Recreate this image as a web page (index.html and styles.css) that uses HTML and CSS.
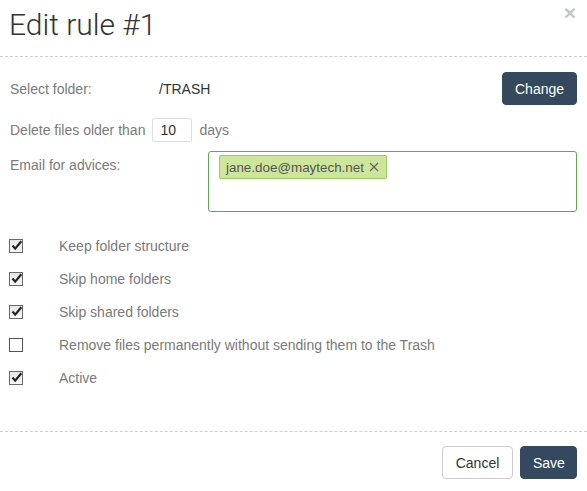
FILE: index.html
```html
<!DOCTYPE html>
<html>
<head>
<meta charset="utf-8">
<link rel="stylesheet" href="styles.css">
</head>
<body>
<div class="modal">
  <div class="modal-header">
    <h1 class="title">Edit rule #1</h1>
    <span class="close">×</span>
  </div>
  <div class="modal-body">
    <div class="row row-folder">
      <span class="label label-folder">Select folder:</span>
      <span class="folder-path">/TRASH</span>
      <button class="btn btn-dark btn-change">Change</button>
    </div>
    <div class="row row-days">
      <span class="label">Delete files older than</span>
      <span class="days-input">10</span>
      <span class="label">days</span>
    </div>
    <div class="row row-email">
      <span class="label label-email">Email for advices:</span>
      <div class="tag-box">
        <span class="tag">jane.doe@maytech.net<svg class="tag-x" viewBox="0 0 10 10" width="10" height="10"><path d="M1 1 L9 9 M9 1 L1 9" stroke="#666" stroke-width="1.2" fill="none"/></svg></span>
      </div>
    </div>
    <div class="checks">
      <div class="check-row"><span class="cb checked"><svg viewBox="0 0 13 13" width="13" height="13"><path d="M2.5 6.5 L5.2 9.6 L11.3 2.2" fill="none" stroke="#1f2326" stroke-width="2.2"/></svg></span><span class="check-label">Keep folder structure</span></div>
      <div class="check-row"><span class="cb checked"><svg viewBox="0 0 13 13" width="13" height="13"><path d="M2.5 6.5 L5.2 9.6 L11.3 2.2" fill="none" stroke="#1f2326" stroke-width="2.2"/></svg></span><span class="check-label">Skip home folders</span></div>
      <div class="check-row"><span class="cb checked"><svg viewBox="0 0 13 13" width="13" height="13"><path d="M2.5 6.5 L5.2 9.6 L11.3 2.2" fill="none" stroke="#1f2326" stroke-width="2.2"/></svg></span><span class="check-label">Skip shared folders</span></div>
      <div class="check-row"><span class="cb"></span><span class="check-label">Remove files permanently without sending them to the Trash</span></div>
      <div class="check-row"><span class="cb checked"><svg viewBox="0 0 13 13" width="13" height="13"><path d="M2.5 6.5 L5.2 9.6 L11.3 2.2" fill="none" stroke="#1f2326" stroke-width="2.2"/></svg></span><span class="check-label">Active</span></div>
    </div>
  </div>
  <div class="modal-footer">
    <button class="btn btn-light">Cancel</button>
    <button class="btn btn-dark">Save</button>
  </div>
</div>
</body>
</html>
```
FILE: styles.css
```css
* { box-sizing: border-box; }
html, body { margin: 0; padding: 0; background: #fff; }
body {
  font-family: "Liberation Sans", Arial, sans-serif;
  font-size: 14px;
  color: #777;
  width: 587px;
  height: 491px;
  overflow: hidden;
}
.modal { width: 587px; }
.modal-header {
  position: relative;
  height: 57px;
  padding: 5px 10px 0 9px;
  border-bottom: 1px dashed #cfcfcf;
}
.title {
  margin: 0;
  font-family: Roboto, "Liberation Sans", sans-serif;
  font-weight: 300;
  font-size: 30px;
  line-height: 40px;
  color: #333;
}
.close {
  position: absolute;
  top: 0;
  right: 11px;
  font-family: "Liberation Sans", Arial, sans-serif;
  font-weight: bold;
  font-size: 21px;
  line-height: 26px;
  color: #c4c4c4;
}
.modal-body { padding: 15px 10px 0 10px; height: 374px; }
.row { display: flex; align-items: center; }
.label { color: #7a7a7a; }
.row-folder { height: 33px; }
.label-folder { width: 149px; }
.folder-path { color: #333; flex: 1; }
.btn {
  font-family: "Liberation Sans", Arial, sans-serif;
  font-size: 14px;
  height: 33px;
  border-radius: 4px;
  padding: 0 12px;
  border: 1px solid transparent;
}
.btn-dark { background: #34495e; color: #fff; border-color: #34495e; }
.btn-change { width: 75px; }
.btn-light { background: #fff; color: #333; border-color: #ccc; }
.row-days { margin-top: 13px; height: 24px; }
.days-input {
  margin-left: 7px;
  margin-right: 7px;
  width: 40px;
  height: 24px;
  border: 1px solid #ddd;
  border-radius: 2px;
  color: #333;
  padding-left: 7px;
  line-height: 22px;
}
.row-email { margin-top: 9px; align-items: flex-start; }
.label-email { width: 198px; padding-top: 6px; }
.tag-box {
  flex: 1;
  height: 61px;
  border: 1px solid #5aab50;
  border-radius: 3px;
  padding: 3px 10px;
}
.tag {
  display: inline-flex;
  align-items: center;
  height: 24px;
  padding: 0 7px 0 6px;
  background: #cde69c;
  border: 1px solid #9ccb5c;
  border-radius: 2px;
  color: #555;
  font-size: 13.4px;
}
.tag-x { margin-left: 5px; }
.checks { margin-top: 17px; }
.check-row { display: flex; align-items: center; height: 33px; }
.cb {
  width: 14px;
  height: 14px;
  margin-left: -1px;
  border: 1px solid #555;
  background: #fff;
  position: relative;
  flex: none;
}
.cb.checked { background: linear-gradient(#e6e6e6, #f8f8f8); border-color: #6a6a6a; }
.cb svg { position: absolute; left: 0; top: -1px; }
.check-label { margin-left: 36px; color: #7a7a7a; }
.modal-footer {
  border-top: 1px dashed #cfcfcf;
  padding: 14px 10px 0 10px;
  display: flex;
  justify-content: flex-end;
  gap: 7px;
}
.modal-footer .btn-light { width: 71px; }
.modal-footer .btn-dark { width: 57px; }
```
